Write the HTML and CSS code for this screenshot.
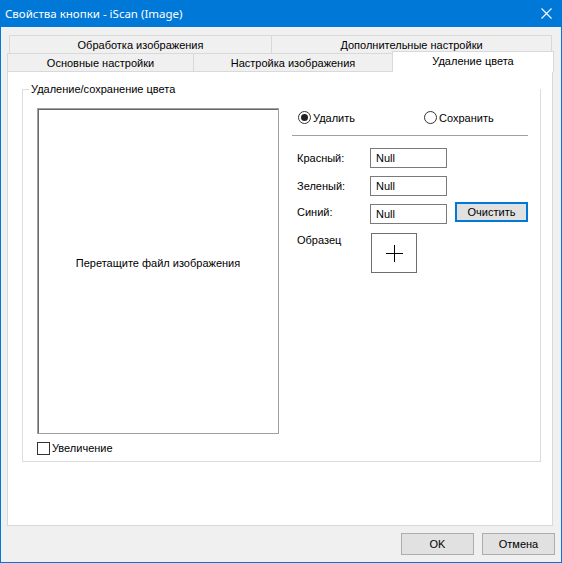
FILE: index.html
```html
<!DOCTYPE html>
<html lang="ru">
<head>
<meta charset="utf-8">
<title>Свойства кнопки - iScan (Image)</title>
<link rel="stylesheet" href="styles.css">
</head>
<body>
<div class="window">
  <div class="titlebar">
    <span class="title">Свойства кнопки - iScan (Image)</span>
    <svg class="close" width="11" height="11" viewBox="0 0 11 11"><path d="M0.5 0.5 L10.5 10.5 M10.5 0.5 L0.5 10.5" stroke="#fff" stroke-width="1.1" fill="none"/></svg>
  </div>
  <div class="tabs">
    <div class="tabrow row1">
      <div class="tab t11">Обработка изображения</div>
      <div class="tab t12">Дополнительные настройки</div>
    </div>
    <div class="tabrow row2">
      <div class="tab t21">Основные настройки</div>
      <div class="tab t22">Настройка изображения</div>
      <div class="tab t23 selected">Удаление цвета</div>
    </div>
  </div>
  <div class="panel">
    <div class="group">
      <span class="legend">Удаление/сохранение цвета</span>
      <div class="group-body">
        <div class="left-col">
          <div class="drop">Перетащите файл изображения</div>
          <div class="check-row"><span class="checkbox"></span><span>Увеличение</span></div>
        </div>
        <div class="right-col">
          <div class="radio-row">
            <div class="radio-item first"><span class="radio on"></span><span>Удалить</span></div>
            <div class="radio-item"><span class="radio"></span><span>Сохранить</span></div>
          </div>
          <div class="sep"></div>
          <div class="field-row r1"><span class="label">Красный:</span><span class="textbox">Null</span></div>
          <div class="field-row r2"><span class="label">Зеленый:</span><span class="textbox">Null</span></div>
          <div class="field-row r3"><span class="label">Синий:</span><span class="textbox tb3">Null</span><span class="btn focus">Очистить</span></div>
          <div class="field-row r4"><span class="label">Образец</span>
            <span class="sample"><svg width="17" height="17" viewBox="0 0 17 17"><path d="M0 8.5 H17 M8.5 0 V17" stroke="#000" stroke-width="1" fill="none"/></svg></span>
          </div>
        </div>
      </div>
    </div>
  </div>
  <div class="footer">
    <span class="btn dlg">OK</span>
    <span class="btn dlg">Отмена</span>
  </div>
</div>
</body>
</html>
```
FILE: styles.css
```css
* { box-sizing: border-box; }
html, body { margin: 0; padding: 0; background: #f0f0f0; }
body { font-family: "Liberation Sans", Arial, sans-serif; font-size: 11px; color: #000; }

.window {
  width: 562px; height: 563px;
  background: #f0f0f0;
  border: 1px solid #0078d7; border-top: 0;
  display: flex; flex-direction: column;
}
.titlebar {
  height: 27px; margin: 0 -1px;
  background: #0078d7; color: #fff;
  display: flex; align-items: center;
  padding-left: 5px; padding-right: 10px;
}
.title { font-family: "Noto Sans", "Open Sans", sans-serif; font-size: 11.5px; flex: 1; }
.close { display: block; }

.tabs { margin: 8px 0 0 6px; display: flex; flex-direction: column; }
.tabrow { display: flex; height: 18px; }
.row1 { margin-left: 2px; }
.tab {
  height: 18px; border: 1px solid #d9d9d9; border-bottom: 0;
  background: #f0f0f0;
  display: flex; align-items: center; justify-content: center;
  line-height: 14px;
}
.tab + .tab { margin-left: -1px; }
.t11 { width: 263px; }
.t12 { width: 281px; }
.t21 { width: 187px; }
.t22 { width: 200px; }
.t23 { width: 162px; }
.tab.selected {
  background: #fff; height: 21px; margin-top: -2px; margin-bottom: -1px;
  position: relative; z-index: 2; padding-bottom: 2px;
}

.panel {
  margin-left: 6px; width: 546px; height: 455px;
  background: #fff; border: 1px solid #d9d9d9;
  position: relative; z-index: 1;
  padding: 17px 0 0 14px;
}
.group {
  width: 519px; height: 373px;
  border: 1px solid #dcdcdc;
  display: flex; flex-direction: column;
}
.legend {
  display: table; margin: -8px 0 0 6px; padding: 0 2px;
  background: #fff; line-height: 14px;
}
.group-body { display: flex; padding: 12px 0 0 14px; }

.left-col { width: 242px; display: flex; flex-direction: column; }
.drop {
  height: 326px;
  border: 1px solid #a0a0a0;
  box-shadow: inset 1px 1px 0 #696969;
  display: flex; align-items: center; justify-content: center;
  padding-bottom: 17px;
}
.check-row { display: flex; align-items: center; margin-top: 7px; gap: 2px; line-height: 13px; }
.checkbox { width: 13px; height: 13px; border: 1px solid #333; background: #fff; }
.check-row span:last-child { padding-top: 1px; }

.right-col { margin-left: 13px; width: 236px; display: flex; flex-direction: column; }
.radio-row { display: flex; margin-top: 3px; padding-left: 6px; height: 13px; }
.radio-item { display: flex; align-items: center; gap: 2px; line-height: 13px; }
.radio-item span:last-child { padding-top: 1px; }
.radio-item.first { width: 126px; }
.radio {
  width: 13px; height: 13px; border-radius: 50%;
  border: 1px solid #333; background: #fff;
  display: flex; align-items: center; justify-content: center;
}
.radio.on::after { content: ""; width: 7px; height: 7px; border-radius: 50%; background: #222; }

.sep { height: 1px; background: #a0a0a0; margin-top: 11px; }

.field-row { display: flex; align-items: center; padding-left: 5px; }
.r1 { margin-top: 12px; }
.r2 { margin-top: 8px; }
.r3 { margin-top: 6px; align-items: flex-start; }
.r4 { margin-top: 9px; align-items: flex-start; }
.label { width: 73px; line-height: 20px; }
.r4 .label { line-height: 14px; }
.textbox {
  width: 77px; height: 20px; border: 1px solid #7a7a7a; background: #fff;
  padding-left: 5px; display: flex; align-items: center;
}
.tb3 { margin-top: 2px; }
.btn {
  background: #e1e1e1; border: 1px solid #adadad;
  display: flex; align-items: center; justify-content: center;
}
.btn.focus { width: 73px; height: 20px; margin-left: 8px; border: 2px solid #0078d7; }
.sample {
  margin-left: 1px; width: 46px; height: 40px; border: 1px solid #6e6e6e;
  display: flex; align-items: center; justify-content: center;
}
.sample svg { display: block; }

.footer { display: flex; justify-content: flex-end; gap: 8px; margin-top: 7px; padding-right: 6px; }
.btn.dlg { width: 73px; height: 22px; }
```
